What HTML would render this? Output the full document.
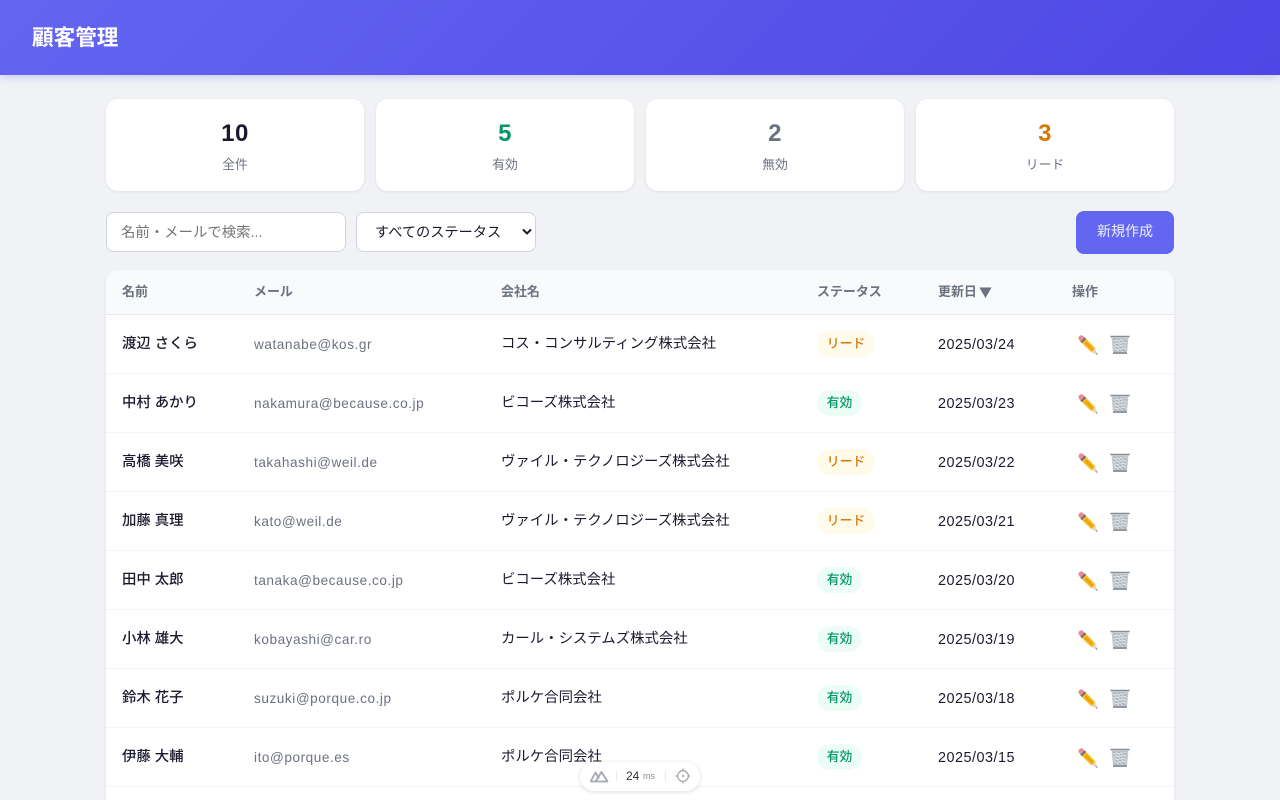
<!DOCTYPE html>
<html lang="ja"><head><meta charset="utf-8"><title>顧客管理</title>
<style>
*{box-sizing:border-box}
html,body{margin:0;width:1280px;height:800px;overflow:hidden}
body{background:#f0f2f5;color:#1a1a2e;font-family:"Liberation Sans","Noto Sans CJK JP",sans-serif;position:relative}
.hd{position:absolute;left:0;top:0;width:1280px;height:75px;background:linear-gradient(135deg,#6366f1,#4f46e5);box-shadow:0 2px 8px rgba(99,102,241,.3)}
.hd h1{position:absolute;left:32px;top:21px;margin:0;font-size:21.6px;line-height:34px;font-weight:700;color:#fff}
.card{position:absolute;top:99px;width:258px;height:92px;background:#fff;border-radius:12px;box-shadow:0 1px 3px rgba(0,0,0,.08);text-align:center}
.card b{position:absolute;left:0;right:0;top:19px;font-size:24px;line-height:32px;font-weight:700;letter-spacing:.5px}
.card span{position:absolute;left:0;right:0;top:56px;font-size:12.8px;line-height:20px;color:#6b7280}
.inp{position:absolute;left:106px;top:212px;width:240px;height:40px;background:#fff;border:1px solid #d1d5db;border-radius:8px;padding-left:14px;font-size:14.4px;line-height:40px;color:#757575}
.sel{position:absolute;left:356px;top:212px;width:180px;height:40px;background:#fff;border:1px solid #d1d5db;border-radius:8px;padding-left:18px;font-size:14.2px;line-height:40px;color:#1a1a2e}
.sel svg{position:absolute;left:165px;top:15px}
.btn{position:absolute;left:1076px;top:211px;width:98px;height:43px;background:#6366f1;border-radius:8px;color:#eef;text-align:center;font-size:14px;line-height:41px}
.tb{position:absolute;left:106px;top:270px;width:1068px;height:640px;background:#fff;border-radius:12px;box-shadow:0 1px 3px rgba(0,0,0,.08);overflow:hidden}
.th{position:absolute;left:0;top:0;width:1068px;height:45px;background:#f9fafb;border-bottom:1px solid #e5e7eb;font-size:12.96px;font-weight:700;color:#6b7280}
.th span{position:absolute;top:0;line-height:43px;white-space:nowrap}
.r{position:absolute;left:0;width:1068px;height:59px;border-bottom:1px solid #f3f4f6;font-size:14.4px}
.r span,.r svg{position:absolute}
.r span{top:0;line-height:58px;white-space:nowrap}
.n{left:16px;font-weight:500}
.r .m{left:148px;top:1px;color:#6b7280;letter-spacing:.55px;font-size:13.6px}
.c{left:395px}
.r .d{left:832px;top:1px;letter-spacing:.5px}
.r .b{left:711px;top:16px;height:26px;line-height:26px;border-radius:13px;font-size:12.8px;font-weight:500;text-align:center}
.lead{width:58px;background:#fffbeb;color:#d97706}
.act{width:45px;background:#ecfdf5;color:#059669}
.p{left:972px;top:20px}.t{left:1004px;top:20px}
.nx{position:absolute;left:580px;top:762px;width:120px;height:29px;background:#fff;border-radius:15px;box-shadow:0 1px 5px rgba(0,0,0,.14)}
.nx span{position:absolute;white-space:nowrap}
.nx i{position:absolute;top:9px;width:1px;height:10px;background:#e5e7eb}
</style></head><body>
<svg width="0" height="0" style="position:absolute"><defs>
<symbol id="pen" viewBox="0 0 20 20"><path d="M.4 3.6Q.2 2.200 1.300 1.200 2.400.1 3.800.3L6.700 2.400 2.400 6.700Z" fill="#ec8a92"/><path d="M2.400 6.700 6.700 2.400 8.300 4 4 8.300Z" fill="#66707c"/><path d="M4 8.300 8.300 4 17.300 13.300 13.300 17.300Z" fill="#fbbf24"/><path d="M6.200 8.400 8.400 6.200 16 14.400 14.400 16Z" fill="#e9a30c"/><path d="M13.300 17.300 17.300 13.300 19.700 19.700Z" fill="#e9d9b8"/><path d="M18.200 18.200 19.700 19.700 17.600 19Z" fill="#333"/></symbol>
<symbol id="tr" viewBox="0 0 20 20"><path d="M.3.800h19.400v1.400H.3Z" fill="#868e96"/><path d="M1.500 2.200h17L16.900 19H3.100Z" fill="#c6cbd0"/><path d="M3 3.500h14L15.700 16.500H4.300Z" fill="#aeb4ba"/><path d="M3.200 6 16.800 4.500M3.500 9 16.500 7M3.800 12 16.200 10M4 15 16 13M3.500 5 15.800 15M6 4 15.500 12M3.800 9 13 16.500M4.100 12.500 9 16.500M10 4 16 9" stroke="#e6e8ea" stroke-width=".8" fill="none"/><path d="M3 17h14L16.800 19H3.200Z" fill="#8f979f"/></symbol>
</defs></svg>
<div class="hd"><h1>顧客管理</h1></div>
<div class="card" style="left:106px"><b>10</b><span>全件</span></div>
<div class="card" style="left:376px"><b style="color:#059669">5</b><span>有効</span></div>
<div class="card" style="left:646px"><b style="color:#6b7280">2</b><span>無効</span></div>
<div class="card" style="left:916px"><b style="color:#d97706">3</b><span>リード</span></div>
<div class="inp">名前・メールで検索...</div>
<div class="sel">すべてのステータス<svg width="10" height="8" viewBox="0 0 10 8"><path d="M1 1.500 5 5.500 9 1.500" fill="none" stroke="#1a1a2e" stroke-width="2"/></svg></div>
<div class="btn">新規作成</div>
<div class="tb">
<div class="th"><span style="left:16px">名前</span><span style="left:148px">メール</span><span style="left:395px">会社名</span><span style="left:711px">ステータス</span><span style="left:832px">更新日</span><span style="left:873px;font-family:'Noto Sans CJK JP',sans-serif">▼</span><span style="left:966px">操作</span></div>
<div class="r" style="top:45px"><span class="n">渡辺 さくら</span><span class="m">watanabe@kos.gr</span><span class="c">コス・コンサルティング株式会社</span><span class="b lead">リード</span><span class="d">2025/03/24</span><svg class="p" width="20" height="20"><use href="#pen"/></svg><svg class="t" width="20" height="20"><use href="#tr"/></svg></div>
<div class="r" style="top:104px"><span class="n">中村 あかり</span><span class="m">nakamura@because.co.jp</span><span class="c">ビコーズ株式会社</span><span class="b act">有効</span><span class="d">2025/03/23</span><svg class="p" width="20" height="20"><use href="#pen"/></svg><svg class="t" width="20" height="20"><use href="#tr"/></svg></div>
<div class="r" style="top:163px"><span class="n">高橋 美咲</span><span class="m">takahashi@weil.de</span><span class="c">ヴァイル・テクノロジーズ株式会社</span><span class="b lead">リード</span><span class="d">2025/03/22</span><svg class="p" width="20" height="20"><use href="#pen"/></svg><svg class="t" width="20" height="20"><use href="#tr"/></svg></div>
<div class="r" style="top:222px"><span class="n">加藤 真理</span><span class="m">kato@weil.de</span><span class="c">ヴァイル・テクノロジーズ株式会社</span><span class="b lead">リード</span><span class="d">2025/03/21</span><svg class="p" width="20" height="20"><use href="#pen"/></svg><svg class="t" width="20" height="20"><use href="#tr"/></svg></div>
<div class="r" style="top:281px"><span class="n">田中 太郎</span><span class="m">tanaka@because.co.jp</span><span class="c">ビコーズ株式会社</span><span class="b act">有効</span><span class="d">2025/03/20</span><svg class="p" width="20" height="20"><use href="#pen"/></svg><svg class="t" width="20" height="20"><use href="#tr"/></svg></div>
<div class="r" style="top:340px"><span class="n">小林 雄大</span><span class="m">kobayashi@car.ro</span><span class="c">カール・システムズ株式会社</span><span class="b act">有効</span><span class="d">2025/03/19</span><svg class="p" width="20" height="20"><use href="#pen"/></svg><svg class="t" width="20" height="20"><use href="#tr"/></svg></div>
<div class="r" style="top:399px"><span class="n">鈴木 花子</span><span class="m">suzuki@porque.co.jp</span><span class="c">ポルケ合同会社</span><span class="b act">有効</span><span class="d">2025/03/18</span><svg class="p" width="20" height="20"><use href="#pen"/></svg><svg class="t" width="20" height="20"><use href="#tr"/></svg></div>
<div class="r" style="top:458px"><span class="n">伊藤 大輔</span><span class="m">ito@porque.es</span><span class="c">ポルケ合同会社</span><span class="b act">有効</span><span class="d">2025/03/15</span><svg class="p" width="20" height="20"><use href="#pen"/></svg><svg class="t" width="20" height="20"><use href="#tr"/></svg></div>
</div>
<div class="nx">
<svg style="position:absolute;left:9px;top:7px" width="20" height="14" viewBox="0 0 20 14"><path d="M1.500 12.500 6.500 3.500 10 9.500M6.500 12.500 12.500 3 18.500 12.500ZM1.500 12.500H7" fill="none" stroke="#a4a9af" stroke-width="1.800" stroke-linejoin="round"/></svg>
<i style="left:36px"></i>
<span style="left:46px;top:6px;font-size:12px;line-height:16px;color:#333">24</span>
<span style="left:63px;top:8px;font-size:9px;line-height:12px;color:#8b8f95">ms</span>
<i style="left:85px"></i>
<svg style="position:absolute;left:95px;top:6px" width="16" height="16" viewBox="0 0 16 16"><circle cx="8" cy="8" r="5.300" fill="none" stroke="#a4a9af" stroke-width="1.300"/><circle cx="8" cy="8" r="1.100" fill="#a4a9af"/><path d="M8 .5V3M8 13v2.500M.5 8H3M13 8h2.500" stroke="#a4a9af" stroke-width="1.300"/></svg>
</div>
</body></html>
